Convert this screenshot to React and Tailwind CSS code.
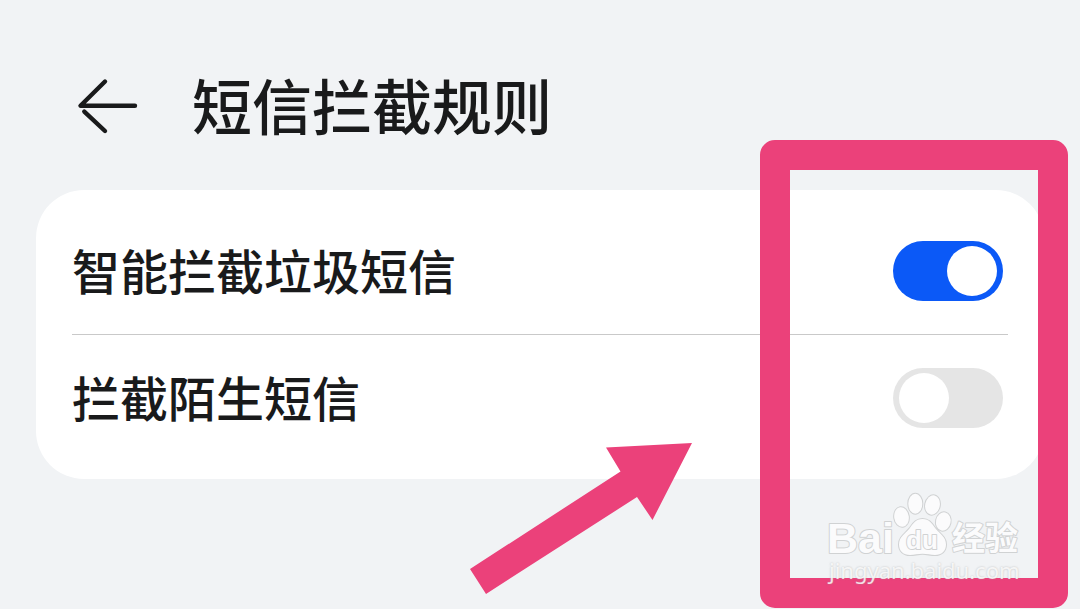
import { useState } from "react";

const rules = [
  { id: "smart-block", label: "智能拦截垃圾短信", enabled: true },
  { id: "stranger-block", label: "拦截陌生短信", enabled: false },
];

function BackArrow() {
  return (
    <svg viewBox="0 0 72 72" className="size-[72px]" fill="none" stroke="#191a1b" strokeWidth="4.4" strokeLinecap="round" aria-hidden="true">
      <path d="M33 11.500 8.500 35.800H63" strokeLinejoin="round" />
      <path d="M12.300 41.600 33 61" strokeLinecap="round" />
    </svg>
  );
}

function RuleRow({ rule, onToggle }) {
  return (
    <li className="box-content flex h-[126px] items-center justify-between">
      <label htmlFor={rule.id} className="pb-1 text-5xl font-medium text-[#191a1b]">
        {rule.label}
      </label>
      <input
        id={rule.id}
        type="checkbox"
        role="switch"
        checked={rule.enabled}
        onChange={() => onToggle(rule.id)}
        className="mr-[5px] flex h-[60px] w-[110px] shrink-0 cursor-pointer appearance-none items-center rounded-full bg-[#e5e5e5] px-1.5 before:size-[50px] before:rounded-full before:bg-white before:content-[''] checked:justify-end checked:bg-[#0b59f7]"
      />
    </li>
  );
}

function Watermark() {
  return (
    <div className="absolute top-[490px] right-[56px] w-[198px]">
      <svg viewBox="0 0 198 68" className="block w-full overflow-visible" role="img" aria-label="Baidu 经验">
        <g fill="#fbfbfc" stroke="#d0d2d3" strokeWidth="2" paintOrder="stroke" strokeLinejoin="round">
          <text x="1" y="63" fontFamily="Liberation Sans, sans-serif" fontWeight="700" fontSize="43">Bai</text>
          <ellipse cx="75.500" cy="27" rx="7.300" ry="9.800" transform="rotate(-8 75.500 27)" />
          <ellipse cx="89.300" cy="13.700" rx="7" ry="10" />
          <ellipse cx="106.500" cy="15" rx="7.300" ry="9.800" transform="rotate(12 106.500 15)" />
          <ellipse cx="117.300" cy="31.500" rx="7.300" ry="9.300" transform="rotate(12 117.300 31.500)" />
          <path d="M96.500 29c-7 0-9.500 5-13 9.500C79 44 73 47 73 54.500c0 6.500 4.500 10.500 11 10.500 4.500 0 8-1.200 12.500-1.200s8 1.200 12.500 1.200c6.500 0 11-4 11-10.500 0-7.500-6-10.500-10.500-16-3.500-4.500-6-9.500-13-9.500Z" />
          <text x="126" y="60" fontFamily="Noto Sans CJK SC, sans-serif" fontWeight="700" fontSize="33">经验</text>
          <text x="80" y="59" fontFamily="Liberation Sans, sans-serif" fontWeight="700" fontSize="26">du</text>
        </g>
      </svg>
      <p className="pl-[3px] font-['Noto_Sans'] text-[22px]/6 text-white/80 [text-shadow:0_0_2px_rgb(150_150_150/0.6)]">
        jingyan.baidu.com
      </p>
    </div>
  );
}

export default function App() {
  const [items, setItems] = useState(rules);
  const toggle = (id) =>
    setItems((list) => list.map((r) => (r.id === id ? { ...r, enabled: !r.enabled } : r)));

  return (
    <div className="relative min-h-screen overflow-hidden bg-[#f1f3f5] px-9 font-['Noto_Sans_CJK_SC',sans-serif]">
      <header className="flex h-[190px] items-center gap-12 px-9 pt-[70px] pb-12">
        <button type="button" aria-label="返回" className="shrink-0 cursor-pointer">
          <BackArrow />
        </button>
        <h1 className="pb-1 text-6xl/[72px] font-medium text-[#191a1b]">短信拦截规则</h1>
      </header>

      <main className="rounded-[48px] bg-white py-[18px] px-9">
        <ul className="divide-y divide-[#c9c9c9]">
          {items.map((r) => (
            <RuleRow key={r.id} rule={r} onToggle={toggle} />
          ))}
        </ul>
      </main>

      <svg viewBox="0 0 222 152" className="pointer-events-none absolute top-[443px] right-[388px] w-[222px]" fill="#eb417a" aria-hidden="true">
        <path d="M222 0 136 4.500 150.500 28.500 0 126 16 151 167 54 182.500 77Z" />
      </svg>
      <div className="pointer-events-none absolute top-[140px] right-3 h-[468px] w-[308px] rounded-[15px] border-[30px] border-[#eb417a]" />
      <Watermark />
    </div>
  );
}
